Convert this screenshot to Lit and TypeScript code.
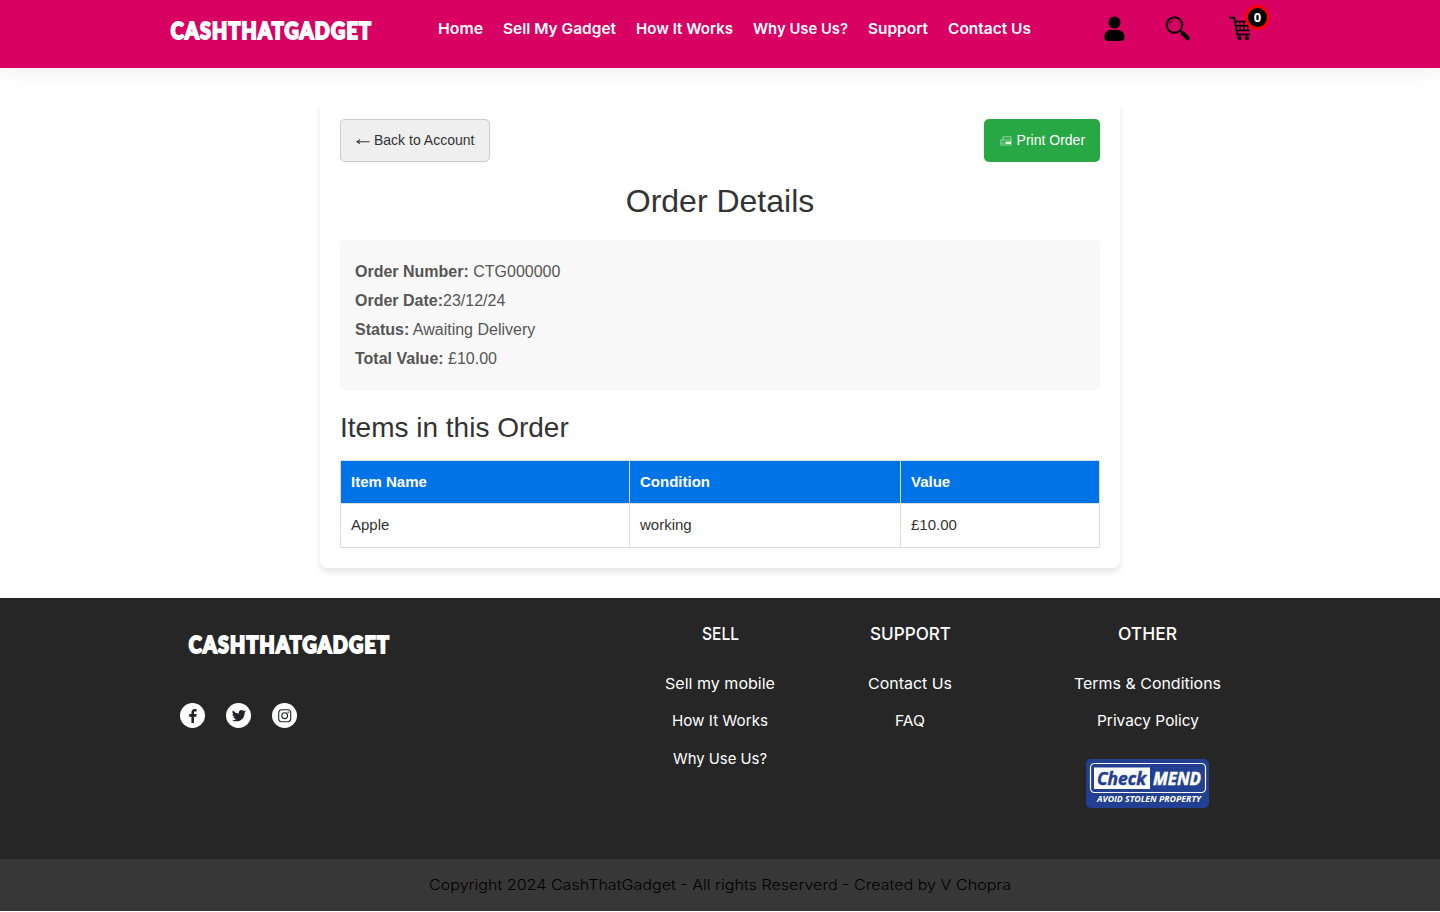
import { LitElement, html, css, svg } from "lit";
import { customElement, property } from "lit/decorators.js";

@customElement("brand-logo")
class BrandLogo extends LitElement {
  static styles = css`
    :host { display: block; width: 204px; height: 26px; }
    svg { display: block; overflow: visible; }
    text { font: 900 22.5px Lato, sans-serif; fill: #fff; stroke: #fff; stroke-width: 2px; }
  `;
  render() {
    return html`<svg width="204" height="26" viewBox="0 0 204 26">
      <text x="2" y="21" transform="scale(.87 1)" textLength="230" lengthAdjust="spacing">CASHTHATGADGET</text>
    </svg>`;
  }
}

@customElement("fit-label")
class FitLabel extends LitElement {
  @property() text = "";
  @property({ type: Number }) w = 0;
  @property({ type: Number }) size = 15;
  @property({ type: Number }) weight = 500;
  static styles = css`
    :host { display: block; }
    svg { display: block; overflow: visible; }
    text { font-family: Inter, sans-serif; fill: currentColor; }
  `;
  render() {
    return html`<svg width=${this.w} height="24">
      <text x="0" y="17" font-size=${this.size} font-weight=${this.weight} textLength=${this.w} lengthAdjust="spacingAndGlyphs">${this.text}</text>
    </svg>`;
  }
}

const nav: [string, number][] = [
  ["Home", 45], ["Sell My Gadget", 113], ["How It Works", 97],
  ["Why Use Us?", 95], ["Support", 60], ["Contact Us", 83],
];

const columns: { title: string; tw: number; cls: string; links: [string, number][] }[] = [
  { title: "SELL", tw: 37, cls: "c1", links: [["Sell my mobile", 110], ["How It Works", 96], ["Why Use Us?", 94]] },
  { title: "SUPPORT", tw: 81, cls: "c2", links: [["Contact Us", 84], ["FAQ", 30]] },
  { title: "OTHER", tw: 59, cls: "c3", links: [["Terms & Conditions", 147], ["Privacy Policy", 102]] },
];

const socials = [
  svg`<path d="M9 15V8.700h2.300l.4-2.600H9V4.600c0-.8.3-1.200 1.300-1.200h1.300V1.100C11.200 1 10.500.9 9.800.9 7.700.9 6.400 2.200 6.400 4.300v1.800H4.200v2.600h2.200V15z" fill="#212529"/>`,
  svg`<path d="M5 14.500c6 0 9.300-5 9.300-9.300v-.4c.6-.5 1.200-1 1.600-1.700-.6.3-1.200.4-1.900.5.7-.4 1.200-1 1.400-1.800-.6.4-1.300.6-2.100.8a3.300 3.300 0 0 0-5.600 3A9.300 9.300 0 0 1 1 2.200a3.300 3.300 0 0 0 1 4.400c-.5 0-1-.2-1.500-.4 0 1.600 1.100 3 2.600 3.300-.5.1-1 .1-1.500 0 .4 1.300 1.600 2.300 3.100 2.300A6.600 6.600 0 0 1 0 13.100c1.400.9 3.200 1.400 5 1.400" fill="#212529" transform="translate(1 .6) scale(.88)"/>`,
  svg`<g fill="none" stroke="#212529" stroke-width="1.100"><rect x="1.700" y="1.700" width="12" height="12" rx="3"/><circle cx="7.700" cy="7.700" r="2.900"/></g><circle cx="11.200" cy="4.300" r=".8" fill="#212529"/>`,
];

@customElement("app-root")
class AppRoot extends LitElement {
  static styles = css`
    :host { display: block; height: 912px; overflow: hidden; background: #fff; color: #333; font-family: "Liberation Sans", Arial, sans-serif; font-size: 16px; line-height: 24px; }
    * { box-sizing: border-box; }
    header { height: 68px; background: #d80062; display: flex; padding-left: 169px; box-shadow: 0 0 20px rgba(0,0,0,.1); }
    .hlogo { margin-top: 18px; width: 269px; }
    nav { display: flex; gap: 20px; margin-top: 17px; color: #fff; }
    .icons { display: flex; margin-left: 70px; padding-top: 13px; }
    .icons svg { display: block; }
    .user { margin-left: 1px; width: 63px; }
    .search { width: 64px; }
    .cart { position: relative; width: 44px; height: 32px; }
    .badge { position: absolute; left: 16px; top: -8px; width: 25px; height: 25px; border-radius: 50%; border: 3px solid #fe0000; background: #000; color: #fff; font: 700 13px/18px "Noto Sans", sans-serif; text-align: center; }
    .card { width: 800px; height: 469px; margin: 31px auto 30px; padding: 20px; border-radius: 8px; background: #fff; box-shadow: 0 4px 6px rgba(0,0,0,.1); }
    .bar { display: flex; justify-content: space-between; }
    button { font: 14px/21px "Liberation Sans", Arial, sans-serif; height: 43px; border-radius: 5px; padding: 0 14px; display: flex; align-items: center; }
    .back { width: 150px; border: 1px solid #ccc; background: #efefef; color: #333; gap: 3px; }
    .print { width: 116px; border: 0; background: #28a745; color: #fff; padding: 0 14px 0 16px; gap: 4.600px; }
    h2 { margin: 20px 0 0; font-size: 32px; font-weight: 400; line-height: 38px; text-align: center; color: #333; }
    .info { margin-top: 20px; height: 151px; padding: 17px 15px; border-radius: 5px; background: #f9f9f9; color: #555; }
    .info p { margin: 0 0 5px; height: 24px; line-height: 30px; }
    h3 { margin: 20px 0 16px; font-size: 28px; font-weight: 400; line-height: 33px; color: #333; }
    table { width: 760px; border-collapse: collapse; table-layout: fixed; font-size: 15px; line-height: 22px; }
    th, td { border: 1px solid #ddd; padding: 0 10px; text-align: left; }
    th { height: 43px; background: #0073e6; color: #fff; }
    td { height: 44px; padding-bottom: 2px; color: #333; }
    .w1 { width: 289px; } .w2 { width: 271px; }
    footer { height: 261px; background: #262626; color: #fff; display: flex; }
    .left { width: 625px; padding: 34px 0 0 180px; }
    .flogo { display: block; margin-left: 7px; }
    .social { display: flex; gap: 21px; margin-top: 45px; }
    .dot { width: 25px; height: 25px; border-radius: 50%; background: #fff; display: grid; place-items: center; }
    .col { display: flex; flex-direction: column; align-items: center; padding-top: 25px; }
    .c1, .c2 { width: 190px; } .c3 { width: 285px; }
    .title { height: 49px; }
    .link { height: 37.400px; }
    .mend { display: block; margin-top: 12px; }
    .mend text { font-family: "Open Sans", sans-serif; font-weight: 700; font-style: italic; }
    .copy { height: 52px; background: #373737; color: #000; display: flex; justify-content: center; padding-top: 14px; }
  `;

  render() {
    return html`
      <header>
        <div class="hlogo"><brand-logo></brand-logo></div>
        <nav>${nav.map(([t, w]) => html`<fit-label .text=${t} .w=${w} .size=${15} .weight=${600}></fit-label>`)}</nav>
        <div class="icons">
          <div class="user"><svg width="26" height="30" viewBox="0 0 26 30"><circle cx="12.500" cy="9.500" r="6"/><path d="M2.500 23.500c0-4 3.200-6.500 6.500-6.500h7c3.300 0 6.500 2.500 6.500 6.500v1c0 2.500-1.500 3.500-4 3.500h-12c-2.500 0-4-1-4-3.500z"/></svg></div>
          <div class="search"><svg width="28" height="30" viewBox="0 0 28 30"><g fill="none" stroke="#000"><circle cx="9.500" cy="12" r="7.700" stroke-width="2"/><path d="M4.800 11.500a5 5 0 0 1 3-4.100" stroke-width=".8"/><path d="M15 17.500l3 3" stroke-width="2"/><path d="M17.700 20.300l5.100 5" stroke-width="4" stroke-linecap="round"/></g></svg></div>
          <div class="cart"><svg width="30" height="30" viewBox="0 0 30 30"><g fill="none" stroke="#000"><path d="M.3 4.800h4.900l3.200 16.700h12.600" stroke-width="1.900"/><path d="M6.600 8.600h14.500M7.200 12.700h13.800M8 17.500h13" stroke-width="1.500"/><path d="M10.500 8.500l1.200 9M14.800 8.500v9M18.700 8.500v9" stroke-width="1.300"/></g><circle cx="10.500" cy="25.200" r="2.100"/><circle cx="18" cy="25.200" r="2.100"/></svg><span class="badge">0</span></div>
        </div>
      </header>
      <main class="card">
        <div class="bar">
          <button class="back"><svg width="16" height="12" viewBox="0 0 16 12"><path d="M1.500 6.700h13M4.800 4.400Q4 6.200 1.500 6.700 4 7.200 4.800 9" fill="none" stroke="#333" stroke-width="1.100"/></svg>Back to Account</button>
          <button class="print"><svg width="12" height="12" viewBox="0 0 12 12"><g fill="none" stroke="#a5dab1" stroke-width=".9"><path d="M3 5V1.800h8v3M.8 5h10.400v5H.8z"/><path d="M1 8h4"/></g><path d="M5.500 6.500h5.500v2.500H5.500z" fill="#dff2e3"/></svg>Print Order</button>
        </div>
        <h2>Order Details</h2>
        <section class="info">
          <p><b>Order Number:</b> CTG000000</p>
          <p><b>Order Date:</b>23/12/24</p>
          <p><b>Status:</b> Awaiting Delivery</p>
          <p><b>Total Value:</b> £10.00</p>
        </section>
        <h3>Items in this Order</h3>
        <table>
          <tr><th class="w1">Item Name</th><th class="w2">Condition</th><th>Value</th></tr>
          <tr><td>Apple</td><td>working</td><td>£10.00</td></tr>
        </table>
      </main>
      <footer>
        <div class="left">
          <brand-logo class="flogo"></brand-logo>
          <div class="social">${socials.map((s) => html`<span class="dot"><svg width="16" height="16" viewBox="0 0 16 16">${s}</svg></span>`)}</div>
        </div>
        ${columns.map((c) => html`<div class="col ${c.cls}">
          <fit-label class="title" .text=${c.title} .w=${c.tw} .size=${17.5} .weight=${500}></fit-label>
          ${c.links.map(([t, w]) => html`<fit-label class="link" .text=${t} .w=${w} .size=${15} .weight=${400}></fit-label>`)}
          ${c.cls === "c3" ? html`<svg class="mend" width="123" height="49" viewBox="0 0 123 49">
            <rect width="123" height="49" rx="5" fill="#233f91"/>
            <rect x="4.500" y="4.500" width="115" height="29" rx="4" fill="none" stroke="#fff" stroke-width="1.200"/>
            <rect x="8" y="8.500" width="56" height="21.500" fill="#fff"/>
            <text x="11" y="25.500" font-size="18.500" fill="#233f91" stroke="#233f91" stroke-width=".5" textLength="49" lengthAdjust="spacingAndGlyphs">Check</text>
            <text x="67" y="25.500" font-size="18.500" fill="#fff" stroke="#fff" stroke-width=".5" textLength="48" lengthAdjust="spacingAndGlyphs">MEND</text>
            <text x="11" y="43.300" font-size="8.500" fill="#fff" textLength="104" lengthAdjust="spacingAndGlyphs">AVOID STOLEN PROPERTY</text>
          </svg>` : ""}
        </div>`)}
      </footer>
      <div class="copy"><fit-label .text=${"Copyright 2024 CashThatGadget - All rights Reserverd - Created by V Chopra"} .w=${582} .size=${14.5} .weight=${300}></fit-label></div>
    `;
  }
}
